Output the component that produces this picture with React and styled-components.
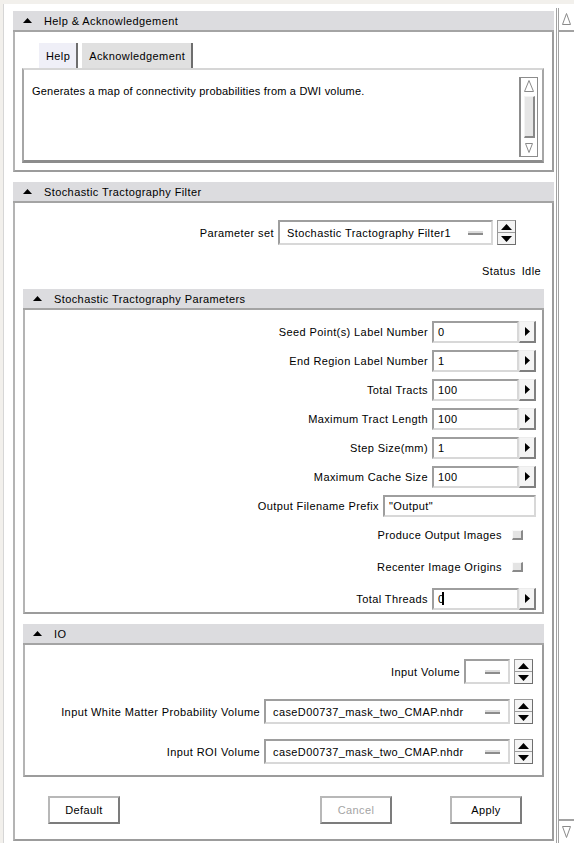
import styled, { createGlobalStyle, css } from "styled-components";

const GlobalStyle = createGlobalStyle`
  html, body {
    margin: 0;
    padding: 0;
    background: #fff;
  }
  body {
    font-family: "Liberation Sans", Arial, sans-serif;
    font-size: 11px;
    letter-spacing: 0.4px;
    color: #000;
  }
`;

// tk-style reliefs
const sunken = css`
  border-style: solid;
  border-width: 2px;
  border-color: #9e9e9e #d8d8d8 #d8d8d8 #9e9e9e;
  background: #fff;
`;

const raised = css`
  border-style: solid;
  border-width: 1px 2px 2px 1px;
  border-color: #ececec #808080 #808080 #ececec;
`;

const Window = styled.div`
  display: flex;
  height: 843px;
  box-sizing: border-box;
  border-top: 4px solid #f2f0ec;
  border-left: 3px solid #f2f0ec;
  overflow: hidden;
`;

const Main = styled.main`
  flex: 1;
  display: flex;
  flex-direction: column;
  gap: 10px;
  padding: 7px 2px 0 9px;
  border-left: 1px solid #d6d6d6;
`;

const Section = styled.section`
  display: flex;
  flex-direction: column;
  margin: ${(p) => (p.$nested ? "10px 8px 0 8px" : "0")};
`;

const SectionHead = styled.div`
  height: 21px;
  box-sizing: border-box;
  display: flex;
  align-items: center;
  gap: 12px;
  padding-left: 10px;
  background: #dcdcdf;
  border-bottom: 2px solid #a4a4a4;
`;

const SectionBody = styled.div`
  display: flex;
  flex-direction: column;
  border-style: solid;
  border-width: 0 2px 2px 2px;
  border-color: #b4b4b4 #9c9c9c #9c9c9c #b4b4b4;
  padding: ${(p) => p.$pad || "0"};
`;

const Caret = () => (
  <svg width="9" height="5" viewBox="0 0 9 5">
    <path d="M0 5 L4.5 0 L9 5 Z" fill="#000" />
  </svg>
);

/* ---- help tabs ---- */

const TabRow = styled.div`
  display: flex;
  gap: 4px;
  margin: 11px 0 0 24px;
`;

const Tab = styled.div`
  height: 25px;
  box-sizing: border-box;
  display: flex;
  align-items: center;
  padding: 0 6px 0 7px;
  background: ${(p) => (p.$active ? "#efeff7" : "#e0e0e0")};
  border-right: 2px solid #6e6e6e;
`;

const TextBox = styled.div`
  height: 95px;
  box-sizing: border-box;
  margin: 0 8px 7px 7px;
  display: flex;
  align-items: flex-start;
  padding: 7px 4px 3px 8px;
  border-style: solid;
  border-width: 2px 2px 3px 2px;
  border-color: #d6d6d6 #a6a6a6 #8c8c8c #a6a6a6;
`;

const HelpText = styled.p`
  flex: 1;
  margin: 8px 0 0;
  letter-spacing: 0.2px;
`;

const MiniScroll = styled.div`
  width: 19px;
  height: 80px;
  box-sizing: border-box;
  display: flex;
  flex-direction: column;
  border: 1px solid #8c8c8c;
  border-left-width: 2px;
`;

const ScrollCap = styled.div`
  height: ${(p) => p.$h || 16}px;
  display: flex;
  align-items: center;
  justify-content: center;
`;

const Thumb = styled.div`
  flex: 1;
  margin: 2px 2px 2px 3px;
  border-style: solid;
  border-width: 1px 2px 2px 1px;
  border-color: #f4f4f4 #8a8a8a #8a8a8a #f4f4f4;
  background: #e6e6e6;
`;

const Hollow = ({ down, w = 10, h = 12 }) => (
  <svg width={w} height={h} viewBox={`0 0 ${w} ${h}`}>
    <path
      d={down ? `M0.5 0.5 L${w / 2} ${h - 0.5} L${w - 0.5} 0.5 Z` : `M0.5 ${h - 0.5} L${w / 2} 0.5 L${w - 0.5} ${h - 0.5} Z`}
      fill="none"
      stroke="#8a8a8a"
      strokeWidth="1"
    />
  </svg>
);

/* ---- filter controls ---- */

const Row = styled.div`
  display: flex;
  align-items: center;
  justify-content: flex-end;
  gap: ${(p) => p.$gap ?? 4}px;
  height: ${(p) => p.$h || 23}px;
  margin-top: ${(p) => p.$mt || 0}px;
  padding-right: ${(p) => p.$pr || 0}px;
  white-space: nowrap;
`;

const Label = styled.span`
  color: ${(p) => (p.$dim ? "#9a9a9a" : "#000")};
`;

const Entry = styled.div`
  ${sunken};
  width: ${(p) => p.$w}px;
  height: 22px;
  box-sizing: border-box;
  display: flex;
  align-items: center;
  padding-left: 4px;
`;

const Cursor = styled.span`
  display: inline-block;
  width: 2px;
  height: 13px;
  margin-left: -3px;
  background: #000;
`;

const StepButton = styled.div`
  ${raised};
  width: 17px;
  height: 22px;
  box-sizing: border-box;
  display: flex;
  align-items: center;
  justify-content: center;
  background: #f4f4f4;
`;

const Field = styled.div`
  display: flex;
`;

const RightTri = () => (
  <svg width="5" height="9" viewBox="0 0 5 9">
    <path d="M0 0 L5 4.5 L0 9 Z" fill="#000" />
  </svg>
);

const MenuButton = styled.div`
  ${sunken};
  width: ${(p) => p.$w}px;
  height: 25px;
  box-sizing: border-box;
  display: flex;
  align-items: center;
  justify-content: space-between;
  padding: 0 8px 0 7px;
`;

const Indicator = styled.span`
  width: 15px;
  height: 5px;
  flex-shrink: 0;
  box-sizing: border-box;
  background: #dadada;
  border-top: 1px solid #fff;
  border-bottom: 2px solid #8c8c8c;
  margin-left: auto;
`;

const Spin = styled.div`
  width: 19px;
  height: 25px;
  box-sizing: border-box;
  display: flex;
  flex-direction: column;
  border: 1px solid #9a9a9a;
  border-right-color: #6e6e6e;
  border-bottom-color: #6e6e6e;
  background: #f4f4f4;
`;

const SpinHalf = styled.div`
  flex: 1;
  display: flex;
  align-items: center;
  justify-content: center;
  & + & {
    border-top: 1px solid #9a9a9a;
  }
`;

const SpinBox = () => (
  <Spin>
    <SpinHalf>
      <svg width="11" height="6" viewBox="0 0 11 6">
        <path d="M0 6 L5.5 0 L11 6 Z" fill="#000" />
      </svg>
    </SpinHalf>
    <SpinHalf>
      <svg width="11" height="6" viewBox="0 0 11 6">
        <path d="M0 0 L5.5 6 L11 0 Z" fill="#000" />
      </svg>
    </SpinHalf>
  </Spin>
);

const Check = styled.span`
  width: 11px;
  height: 10px;
  flex-shrink: 0;
  box-sizing: border-box;
  margin: 0 13px 0 10px;
  background: #e4e4e4;
  border-style: solid;
  border-width: 1px 2px 2px 1px;
  border-color: #fafafa #8a8a8a #8a8a8a #fafafa;
`;

const ButtonRow = styled.div`
  display: flex;
  align-items: center;
  padding: 19px 0 15px 33px;
`;

const Button = styled.button`
  width: 72px;
  height: 28px;
  margin-left: ${(p) => p.$ml || 0}px;
  font: inherit;
  letter-spacing: inherit;
  color: ${(p) => (p.$disabled ? "#a4a4a4" : "#000")};
  background: #fff;
  border-style: solid;
  border-width: 2px;
  border-color: #b8b8b8 #7c7c7c #7c7c7c #b8b8b8;
  padding: 0;
`;

/* ---- page scrollbar ---- */

const PageScroll = styled.div`
  width: 15px;
  margin-top: 4px;
  display: flex;
  flex-direction: column;
  border-left: 3px double #a2a2a2;
`;

const PageTrough = styled.div`
  flex: 1;
`;

const PageCap = styled.div`
  height: 22px;
  display: flex;
  align-items: center;
  justify-content: center;
  border-${(p) => (p.$bottom ? "top" : "bottom")}: 2px solid #a2a2a2;
`;

const params = [
  ["Seed Point(s) Label Number", "0"],
  ["End Region Label Number", "1"],
  ["Total Tracts", "100"],
  ["Maximum Tract Length", "100"],
  ["Step Size(mm)", "1"],
  ["Maximum Cache Size", "100"],
];

const NumberField = ({ label, value, mt, cursor }) => (
  <Row $mt={mt}>
    <Label>{label}</Label>
    <Field>
      <Entry $w={87}>
        {value}
        {cursor && <Cursor />}
      </Entry>
      <StepButton>
        <RightTri />
      </StepButton>
    </Field>
  </Row>
);

const VolumeRow = ({ label, value, w }) => (
  <Row $h={25} $pr={9} $gap={4}>
    <Label>{label}</Label>
    <MenuButton $w={w}>
      {value && <span>{value}</span>}
      <Indicator />
    </MenuButton>
    <SpinBox />
  </Row>
);

export default function App() {
  return (
    <>
      <GlobalStyle />
      <Window>
        <Main>
          <Section>
            <SectionHead>
              <Caret />
              Help &amp; Acknowledgement
            </SectionHead>
            <SectionBody>
              <TabRow>
                <Tab $active>Help</Tab>
                <Tab>Acknowledgement</Tab>
              </TabRow>
              <TextBox>
                <HelpText>Generates a map of connectivity probabilities from a DWI volume.</HelpText>
                <MiniScroll>
                  <ScrollCap>
                    <Hollow w={10} h={12} />
                  </ScrollCap>
                  <Thumb />
                  <ScrollCap>
                    <Hollow down w={8} h={10} />
                  </ScrollCap>
                </MiniScroll>
              </TextBox>
            </SectionBody>
          </Section>

          <Section>
            <SectionHead>
              <Caret />
              Stochastic Tractography Filter
            </SectionHead>
            <SectionBody>
              <Row $h={27} $mt={16} $pr={36}>
                <Label>Parameter set</Label>
                <MenuButton $w={215}>
                  <span>Stochastic Tractography Filter1</span>
                  <Indicator />
                </MenuButton>
                <SpinBox />
              </Row>
              <Row $h={16} $mt={17} $pr={11} $gap={6}>
                <Label>Status</Label>
                <Label>Idle</Label>
              </Row>

              <Section $nested>
                <SectionHead>
                  <Caret />
                  Stochastic Tractography Parameters
                </SectionHead>
                <SectionBody $pad="10px 6px 2px 0">
                  {params.map(([label, value], i) => (
                    <NumberField key={label} label={label} value={value} mt={i ? 6 : 0} />
                  ))}
                  <Row $mt={6}>
                    <Label>Output Filename Prefix</Label>
                    <Entry $w={153}>"Output"</Entry>
                  </Row>
                  <Row $mt={6} $gap={0}>
                    <Label>Produce Output Images</Label>
                    <Check />
                  </Row>
                  <Row $mt={9} $gap={0}>
                    <Label>Recenter Image Origins</Label>
                    <Check />
                  </Row>
                  <NumberField label="Total Threads" value="0" mt={9} cursor />
                </SectionBody>
              </Section>

              <Section $nested>
                <SectionHead>
                  <Caret />
                  IO
                </SectionHead>
                <SectionBody $pad="14px 0 11px 0">
                  <VolumeRow label="Input Volume" w={46} />
                  <Row $h={15} />
                  <VolumeRow
                    label="Input White Matter Probability Volume"
                    value="caseD00737_mask_two_CMAP.nhdr"
                    w={246}
                  />
                  <Row $h={15} />
                  <VolumeRow label="Input ROI Volume" value="caseD00737_mask_two_CMAP.nhdr" w={246} />
                </SectionBody>
              </Section>

              <ButtonRow>
                <Button>Default</Button>
                <Button $ml={200} $disabled>
                  Cancel
                </Button>
                <Button $ml={58}>Apply</Button>
              </ButtonRow>
            </SectionBody>
          </Section>
        </Main>

        <PageScroll>
          <PageCap>
            <Hollow w={9} h={12} />
          </PageCap>
          <PageTrough />
          <PageCap $bottom>
            <Hollow down w={9} h={12} />
          </PageCap>
        </PageScroll>
      </Window>
    </>
  );
}
